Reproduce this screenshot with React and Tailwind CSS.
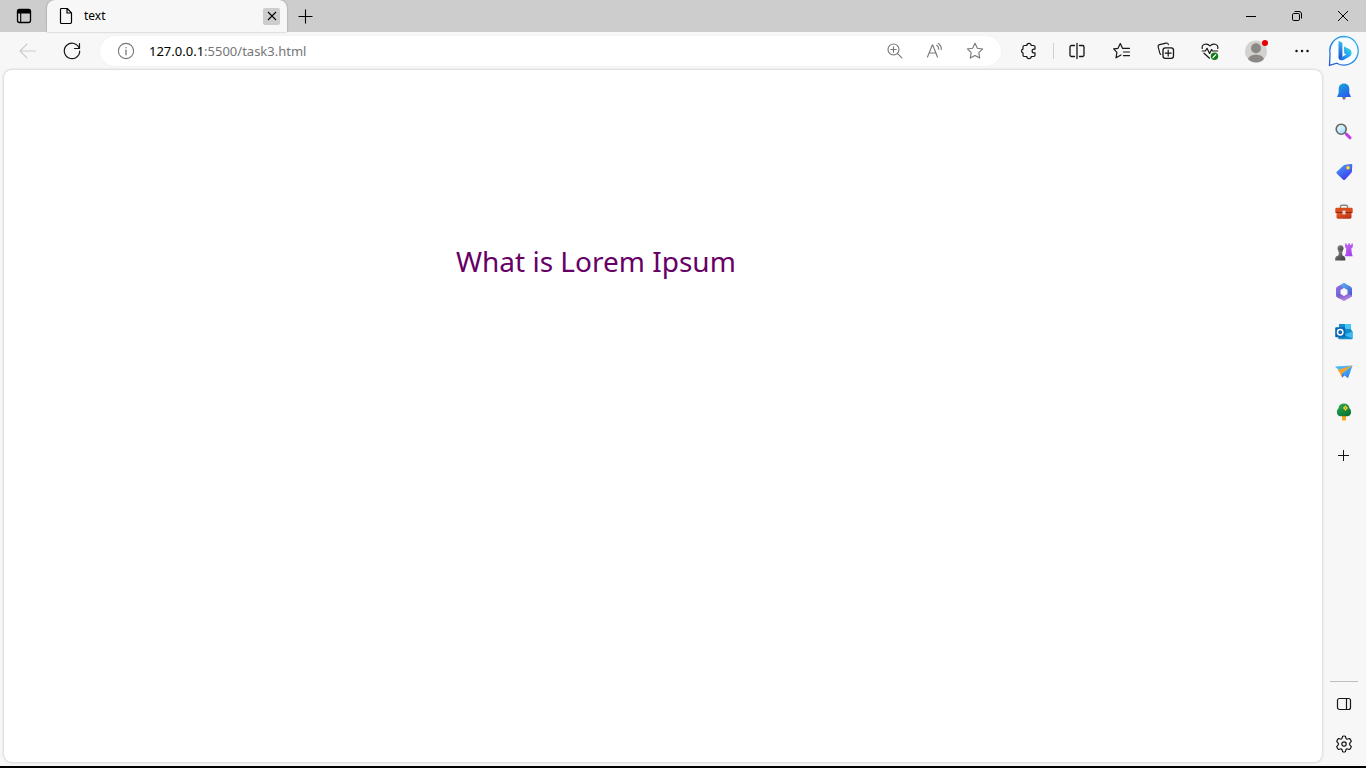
import React from "react";

function Icon({ children, size = "size-5", className = "" }) {
  return (
    <svg viewBox="0 0 20 20" className={`${size} shrink-0 ${className}`} fill="none" stroke="currentColor" strokeWidth="1.1" strokeLinecap="round" strokeLinejoin="round" aria-hidden="true">
      {children}
    </svg>
  );
}

function IconButton({ label, className = "", children }) {
  return (
    <button type="button" aria-label={label} className={`flex shrink-0 items-center justify-center ${className}`}>
      {children}
    </button>
  );
}

const starPath = "M10 2.3l2.35 4.9 5.35.75-3.9 3.75.95 5.35L10 14.5l-4.75 2.55.95-5.35-3.9-3.75 5.35-.75z";

function TabBar() {
  return (
    <header className="flex h-8 shrink-0 bg-[#cdcdcd] text-black">
      <IconButton label="Tab actions menu" className="w-[47px]">
        <Icon>
          <rect x="3.5" y="3.5" width="13" height="13" rx="2" strokeWidth="1.3" />
          <path d="M3.5 7V5.5a2 2 0 0 1 2-2h9a2 2 0 0 1 2 2V7z" fill="currentColor" />
          <path d="M6.7 7v9.5" />
        </Icon>
      </IconButton>
      <div className="flex w-60 items-center rounded-t-lg bg-[#f7f7f7] pr-[7px] pl-2 shadow-[0_0_2px_rgba(0,0,0,0.35)]">
        <Icon className="mr-2 ml-px">
          <path d="M5.5 2.5h5.7l4.3 4.3v9.2a1.5 1.5 0 0 1-1.5 1.5H5.5a1 1 0 0 1-1-1v-13a1 1 0 0 1 1-1zM11 2.7V7h4.3" strokeWidth="1.2" />
        </Icon>
        <span className="flex-1 text-xs">text</span>
        <IconButton label="Close tab" className="size-[17px] rounded-xs bg-[#cdcdcd]">
          <svg viewBox="0 0 10 10" className="size-2.5" stroke="currentColor" strokeWidth="1.1"><path d="M1 1l8 8M9 1L1 9" /></svg>
        </IconButton>
      </div>
      <IconButton label="New tab" className="w-9">
        <svg viewBox="0 0 15 15" className="size-[15px]" stroke="currentColor" strokeWidth="1.1"><path d="M.5 7.5h14M7.5.5v14" /></svg>
      </IconButton>
      <div className="ml-auto flex">
        <IconButton label="Minimize" className="w-[46px]">
          <svg viewBox="0 0 10 10" className="size-2.5" stroke="currentColor"><path d="M0 5.5h10" /></svg>
        </IconButton>
        <IconButton label="Restore" className="w-[46px]">
          <svg viewBox="0 0 10 10" className="size-2.5" fill="none" stroke="currentColor"><rect x=".5" y="2.5" width="7" height="7" rx="1.3" /><path d="M2.5.5H7A2.5 2.5 0 0 1 9.5 3v4.5" /></svg>
        </IconButton>
        <IconButton label="Close" className="w-[46px]">
          <svg viewBox="0 0 10 10" className="size-2.5" stroke="currentColor"><path d="M0 0l10 10M10 0L0 10" /></svg>
        </IconButton>
      </div>
    </header>
  );
}

function BingLogo() {
  return (
    <svg viewBox="0 0 32 32" className="size-8" aria-hidden="true">
      <defs>
        <linearGradient id="bingRing" x1="1" y1="0" x2="0" y2="1"><stop stopColor="#35bdf2" /><stop offset=".5" stopColor="#278de8" /><stop offset="1" stopColor="#2457cf" /></linearGradient>
        <linearGradient id="bingStem" x1="0" y1="0" x2="0" y2="1"><stop stopColor="#35b9f5" /><stop offset="1" stopColor="#1948cc" /></linearGradient>
        <linearGradient id="bingBowl" x1="1" y1="0" x2="0" y2="1"><stop stopColor="#3be0dc" /><stop offset=".55" stopColor="#249cf0" /><stop offset="1" stopColor="#1f5be0" /></linearGradient>
      </defs>
      <path d="M16 1.5a14.3 14.3 0 1 1-7.2 26.7L1.5 30.4l.6-11.8A14.3 14.3 0 0 1 16 1.5z" fill="#fafdff" stroke="url(#bingRing)" strokeWidth="1.3" />
      <path d="M10.5 6.1l3 1.2c.6.3.9.8.9 1.4v12.1l-1.1 4.1c-1.7.2-2.8-.9-2.8-2.7z" fill="url(#bingStem)" />
      <path d="M16 11.5l5.2 2.5c2.8 1.4 3.2 5 .9 7.3l-6.2 3.4c-2.2 1.2-4.2.2-5.1-1l7.6-4.3-2.2-1.2z" fill="url(#bingBowl)" />
    </svg>
  );
}

function Toolbar() {
  return (
    <nav className="flex h-[38px] shrink-0 items-center pl-1.5 text-[#161616]" aria-label="Browser toolbar">
      <IconButton label="Back" className="h-8 w-11 text-[#cbcbcb]"><Icon><path d="M17.5 10h-15M9 3l-7 7 7 7" /></Icon></IconButton>
      <IconButton label="Refresh" className="h-8 w-11">
        <Icon><path d="M17.3 7.5A7.7 7.7 0 1 0 17.7 10M17.5 2.5v5h-5" strokeWidth="1.2" /></Icon>
      </IconButton>
      <div className="ml-1.5 flex h-[30px] min-w-0 flex-1 items-center rounded-full bg-white pr-1.5 text-[#767676] shadow-[0_0_2px_rgba(0,0,0,0.05)]">
        <IconButton label="View site information" className="ml-4">
          <Icon><circle cx="10" cy="10" r="7.6" /><path d="M10 9.2v4.6" strokeWidth="1.3" /><circle cx="10" cy="6.7" r=".7" fill="currentColor" stroke="none" /></Icon>
        </IconButton>
        <a href="http://127.0.0.1:5500/task3.html" className="ml-[13px] flex-1 truncate text-[13px] leading-5"><span className="text-black">127.0.0.1</span>:5500/task3.html</a>
        <IconButton label="Zoom" className="w-10"><Icon><circle cx="8.5" cy="8.5" r="5.5" /><path d="M12.6 12.6l4.3 4.3M8.5 5.8v5.4M5.8 8.5h5.4" /></Icon></IconButton>
        <IconButton label="Read aloud" className="w-10">
          <Icon><path d="M2.5 16L7.3 4h.4l4.8 12M4 12h7M11.7 4.2c1.3.8 2 2.2 2 4M13.2 2.5c2 1.1 3.2 3.3 3.1 6" /></Icon>
        </IconButton>
        <IconButton label="Add this page to favorites" className="w-10"><Icon><path d={starPath} /></Icon></IconButton>
      </div>
      <IconButton label="Extensions" className="ml-1.5 h-8 w-11">
        <Icon><path d="M5.5 4.5h2.3a2.2 2.2 0 0 1 4.4 0h2.3a1.5 1.5 0 0 1 1.5 1.5v2.1h-1a1.9 1.9 0 0 0 0 3.8h1V14a1.5 1.5 0 0 1-1.5 1.5h-2.3a2.2 2.2 0 0 1-4.4 0H5.5A1.5 1.5 0 0 1 4 14v-2.1a1.95 1.95 0 0 1 0-3.8V6a1.5 1.5 0 0 1 1.5-1.5z" strokeWidth="1.2" /></Icon>
      </IconButton>
      <div className="ml-0.5 h-4 w-px shrink-0 bg-[#cfcfcf]" />
      <IconButton label="Split screen" className="ml-px h-8 w-11">
        <Icon><path d="M7.5 4.5h-3A1.5 1.5 0 0 0 3 6v8a1.5 1.5 0 0 0 1.5 1.5h3M12.5 4.5h3A1.5 1.5 0 0 1 17 6v8a1.5 1.5 0 0 1-1.5 1.5h-3M10 2.5v15" strokeWidth="1.3" /></Icon>
      </IconButton>
      <IconButton label="Favorites" className="ml-px h-8 w-11">
        <Icon><path d="M10.5 7.3L8.3 2.6 6 7.3l-4.3.6 3.2 3.5-.9 5.4 5-2.8M10.5 7.3h7M11.5 11h6M11.5 14.7h6" strokeWidth="1.2" /></Icon>
      </IconButton>
      <IconButton label="Collections" className="h-8 w-11">
        <Icon><path d="M4.8 13.4a2 2 0 0 1-1-1.3L2.2 6a2 2 0 0 1 1.4-2.4l6.5-1.5A2 2 0 0 1 12.4 3.7" /><rect x="7" y="6.8" width="10.5" height="10.5" rx="2.3" strokeWidth="1.3" /><path d="M12.2 9.1v6M9.2 12.1h6" strokeWidth="1.2" /></Icon>
      </IconButton>
      <IconButton label="Browser essentials" className="h-8 w-11">
        <Icon><path d="M2.2 7.5C1.4 2.7 7.4 1.7 10 5c2.6-3.3 8.6-2.3 7.8 2.5M2.2 10h3.2L7 7.3l2.6 5.2 2-4 1 1.5h5.1M4 12.2l5.5 5" strokeWidth="1.2" /><circle cx="14.5" cy="15.2" r="3.7" fill="#147a18" stroke="none" /><path d="M13 16.5l2.8-2.8" stroke="#fff" strokeWidth="1.2" /></Icon>
      </IconButton>
      <IconButton label="Profile" className="h-8 w-12">
        <svg viewBox="0 0 24 24" className="size-6">
          <defs><clipPath id="avatarClip"><circle cx="12" cy="12.5" r="11" /></clipPath></defs>
          <circle cx="12" cy="12.5" r="11" fill="#d4d2cf" /><circle cx="12" cy="9.3" r="5" fill="#8b8885" /><ellipse cx="12" cy="20.7" rx="8" ry="5.2" fill="#8b8885" clipPath="url(#avatarClip)" /><circle cx="21" cy="4" r="3" fill="#e60000" />
        </svg>
      </IconButton>
      <IconButton label="Settings and more" className="h-8 w-11"><Icon><path d="M4.5 10h.1M10 10h.1M15.5 10h.1" strokeWidth="2.4" /></Icon></IconButton>
      <IconButton label="Bing Chat" className="mr-0.5 w-10"><BingLogo /></IconButton>
    </nav>
  );
}

function Gradient({ id, from, to }) {
  return <linearGradient id={id} x1="0" y1="0" x2=".7" y2="1"><stop stopColor={from} /><stop offset="1" stopColor={to} /></linearGradient>;
}

const apps = [
  { label: "Notifications", art: <><Gradient id="bell" from="#16abdc" to="#285bea" /><path d="M8 15h4l-1 2.4H9z" fill="#777" /><path d="M10 1.5c3.3 0 5.3 2.3 5.3 5.5v4l1.7 4H3l1.7-4V7c0-3.2 2-5.5 5.3-5.5z" fill="url(#bell)" /></> },
  { label: "Search", art: <><Gradient id="lens" from="#f3fdff" to="#a8dcf8" /><path d="M11.2 11l1.8 1.8" stroke="#666" strokeWidth="2" /><path d="M12.8 12.6l3.2 3.2" stroke="#c237ee" strokeWidth="3" strokeLinecap="round" /><circle cx="7.2" cy="7.2" r="5" fill="url(#lens)" stroke="#666" strokeWidth="1.6" /></> },
  { label: "Shopping", art: <><Gradient id="tag" from="#48a5ff" to="#4037ea" /><path d="M11.2 2.7l6-.6c.8 0 1.1.4 1.1 1.1l-.4 6.3c0 .6-.3 1.1-.7 1.5l-6 6.4c-.8.8-1.5.9-2.3.1L3 11.8c-.8-.8-.8-1.5 0-2.3l6.8-6.2c.4-.4.8-.6 1.4-.6z" fill="url(#tag)" /><circle cx="14" cy="5.8" r="1.8" fill="#ffdc4f" stroke="#d89e2d" strokeWidth=".5" /></> },
  { label: "Tools", art: <><Gradient id="toolbox" from="#ef6128" to="#b83214" /><path d="M6.5 7V4.6c0-.9.5-1.3 1.3-1.3h4.4c.8 0 1.3.4 1.3 1.3V7" fill="none" stroke="#858585" strokeWidth="1.4" /><rect x="1.3" y="5.7" width="17.4" height="5" rx="1.3" fill="#d94d1c" /><path d="M2.5 10.5h15v4.8c0 .9-.5 1.4-1.4 1.4H3.9c-.9 0-1.4-.5-1.4-1.4z" fill="url(#toolbox)" /><path d="M1.5 10.5h17" stroke="#8d2410" /><rect x="8.5" y="8.5" width="3" height="4" rx=".7" fill="#d9d9d9" /></> },
  { label: "Games", art: <><Gradient id="rook" from="#c66bf7" to="#a640e8" /><Gradient id="pawn" from="#888" to="#444" /><path d="M11 1.5h1.8V3h1.3V1.5h2V3h1.3V1.5h1.4V5l-1.5 1.5.5 5 .9 2.7h-8l1.2-2.7.3-5L11 5z" fill="url(#rook)" /><circle cx="6.5" cy="6.3" r="3" fill="url(#pawn)" /><path d="M4 8.5h5v1.3H8l.5 3.7c1.9.6 2.8 1.7 2.8 3.3v1.7H1.2v-1.7c0-1.6 1-2.7 3.2-3.3L5 9.8H4z" fill="url(#pawn)" /></> },
  { label: "Microsoft 365", art: <><Gradient id="mLeft" from="#a66be0" to="#3f6ad8" /><Gradient id="mRight" from="#55b6ef" to="#5059cf" /><Gradient id="mBase" from="#6a4fc4" to="#c08bea" /><path d="M9 1.4L3.2 4.8c-.8.5-1.2 1.1-1.2 2v6.4c0 .9.4 1.6 1.2 2l2.2 1.3c.7.3 1.4-.1 1.4-.9V8.2L13.2 4z" fill="url(#mLeft)" /><path d="M9 1.4c.8-.4 1.5-.4 2.2 0l5.6 3.3c.8.5 1.2 1.2 1.2 2.1v6.4c0 .6-.2 1.1-.6 1.5l-4.2-2.8V8.2L8.4 5.4c-1.3-.9-1.2-2.7.6-4z" fill="url(#mRight)" /><path d="M13.2 11.8L10 13.7l-3.2-1.9-4.3 2.6c.2.4.5.7.9.9l5.5 3.3c.8.4 1.5.4 2.2 0l5.7-3.3c.8-.5 1.2-1.1 1.2-2z" fill="url(#mBase)" /><path d="M10 6.1l3.4 2v3.9L10 14l-3.4-2V8.1z" fill="#f7f7f7" /></> },
  { label: "Outlook", art: <><path d="M5 2h12v8H5z" fill="#168bd0" /><path d="M11 2h6v5h-6z" fill="#45c8f5" /><path d="M3.5 8l13.5-.5 1.5 2v6.9c0 .5-.4.9-.9.9H5.4c-.7 0-1.2-.5-1.2-1.2z" fill="#128acc" /><path d="M18.5 9.5v7L10 12.8z" fill="#37baf0" /><rect x="1.2" y="5.3" width="10" height="10" rx="1" fill="#0b67b5" /><circle cx="6.2" cy="10.3" r="2.7" fill="none" stroke="#fff" strokeWidth="1.5" /></> },
  { label: "Drop", art: <><Gradient id="plane" from="#54d0ff" to="#3075ed" /><path d="M1 4.5l17.5-.9L6.5 9.6z" fill="#48b6f5" /><path d="M18.5 3.6L14 16.3 7.5 11z" fill="url(#plane)" /><path d="M3.5 8.1L18.5 3.6 8 11.2v4.6L5.2 9.8z" fill="#f9a324" /><path d="M8 15.8l2.8-2.6L8 11.2z" fill="#3976df" /></> },
  { label: "E-tree", art: <><Gradient id="tree" from="#35ac57" to="#067430" /><path d="M8 13.5h4v4c0 .7-.4 1-1 1H9c-.6 0-1-.3-1-1z" fill="#f7a622" /><path d="M10 1.5c3.2 0 5.2 2 5.5 4.8 2.6 2.2 2 7.3-1.5 8H6c-3.5-.7-4.1-5.8-1.5-8C4.8 3.5 6.8 1.5 10 1.5z" fill="url(#tree)" /><path d="M11.5 3.2l1.1 1.6 1.7 1.2-1.7 1.2-1.1 1.7-1.2-1.7-1.6-1.2 1.6-1.2z" fill="#ffd22e" /><circle cx="11.5" cy="6" r=".7" fill="#43852b" /></> },
];

function Sidebar() {
  return (
    <aside className="flex w-11 shrink-0 flex-col py-0.5 text-[#161616]" aria-label="Sidebar">
      {apps.map(({ label, art }) => (
        <IconButton key={label} label={label} className="h-10">
          <svg viewBox="0 0 20 20" className="size-5" aria-hidden="true">{art}</svg>
        </IconButton>
      ))}
      <IconButton label="Customize" className="mt-[3px] h-10">
        <svg viewBox="0 0 12 12" className="size-3" stroke="currentColor"><path d="M0 6.5h11M5.5 1v11" /></svg>
      </IconButton>
      <div className="mx-2 mt-auto mb-0.5 h-px bg-[#bdbdbd]" />
      <IconButton label="Hide sidebar" className="h-10">
        <Icon><rect x="3.5" y="4.5" width="13" height="11" rx="2" strokeWidth="1.2" /><path d="M12.5 4.5v11" strokeWidth="1.2" /></Icon>
      </IconButton>
      <IconButton label="Sidebar settings" className="h-10">
        <Icon><circle cx="10" cy="10" r="2.2" strokeWidth="1.2" /><path d="M8.7 2.2Q10 1.8 11.3 2.2l.6 2q.5 1 1.6.8l2-.5q1.3 1.2 1.8 2.9l-1.5 1.7q-.7.9 0 1.8l1.5 1.7q-.5 1.7-1.8 2.9l-2-.5q-1.1-.2-1.6.8l-.6 2q-1.3.4-2.6 0l-.6-2q-.5-1-1.6-.8l-2 .5q-1.3-1.2-1.8-2.9l1.5-1.7q.7-.9 0-1.8L2.7 7.4q.5-1.7 1.8-2.9l2 .5q1.1.2 1.6-.8z" strokeWidth="1.2" /></Icon>
      </IconButton>
    </aside>
  );
}

export default function App() {
  return (
    <div className="flex min-h-screen flex-col border-b-2 border-black bg-[#f7f7f7] font-['Noto_Sans',sans-serif]">
      <TabBar />
      <Toolbar />
      <div className="flex flex-1">
        <main className="mb-1 ml-1 flex-1 rounded-lg bg-white pt-[173px] pl-[452px] shadow-[0_0_3px_rgba(0,0,0,0.25)]">
          <h1 className="text-[28px] leading-9 text-[#660066]">What is Lorem Ipsum</h1>
        </main>
        <Sidebar />
      </div>
    </div>
  );
}
